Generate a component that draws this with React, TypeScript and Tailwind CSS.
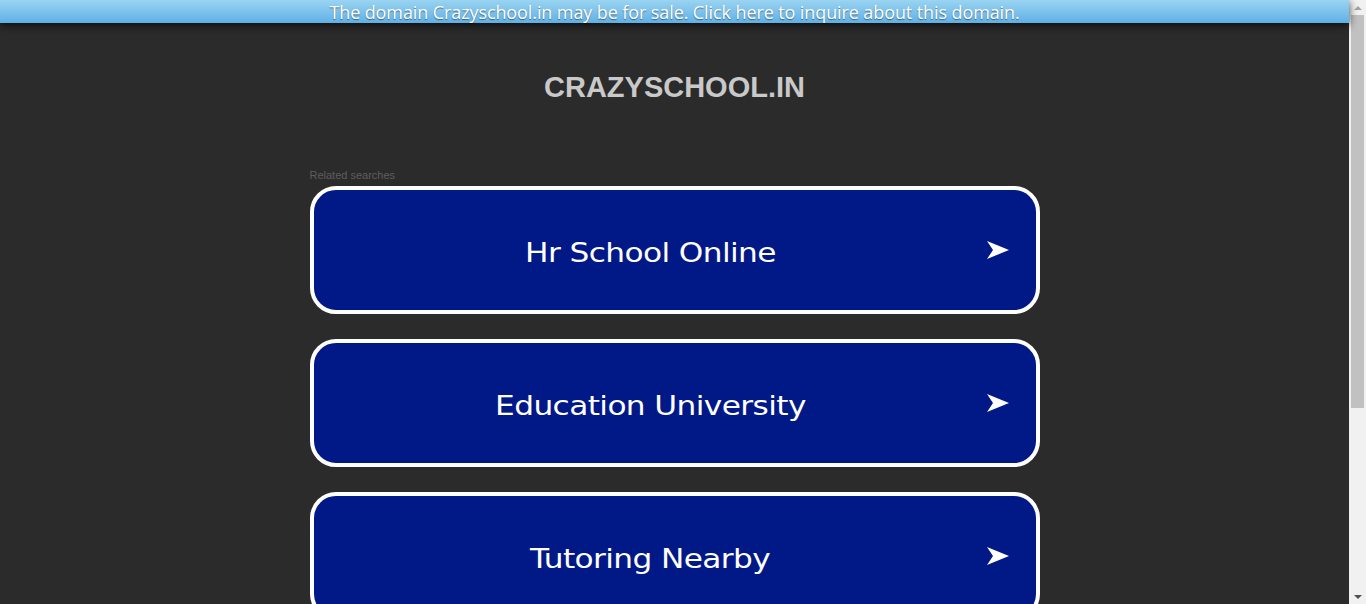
const searches = ["Hr School Online", "Education University", "Tutoring Nearby"];

function Arrow() {
  return (
    <svg width="22" height="18" viewBox="0 0 22 18" aria-hidden="true">
      <path d="M0 0 L22 9 L0 18 L6 9 Z" fill="#ffffff" />
    </svg>
  );
}

function SearchCard({ label }: { label: string }) {
  return (
    <a
      href="#"
      className="relative flex h-[128px] shrink-0 items-center rounded-[26px] border-4 border-white bg-[#011887] pr-[48px] text-white"
    >
      <span className="flex-1 pt-[5px] text-center">
        <span className="inline-block scale-x-[1.2] font-['DejaVu_Sans',sans-serif] text-[26px] leading-[30px] tracking-[-0.5px]">
          {label}
        </span>
      </span>
      <span className="absolute right-[27px] top-1/2 flex -translate-y-1/2">
        <Arrow />
      </span>
    </a>
  );
}

function Scrollbar() {
  return (
    <div className="flex h-full w-[17px] shrink-0 flex-col items-center bg-[#f1f1f1]">
      <div className="flex h-[15px] items-center justify-center">
        <div className="h-0 w-0 border-x-[4px] border-b-[4px] border-x-transparent border-b-[#a3a3a3]" />
      </div>
      <div className="h-[393px] w-[13px] bg-[#c1c1c1]" />
      <div className="flex-1" />
      <div className="flex h-[15px] items-center justify-center">
        <div className="h-0 w-0 border-x-[4px] border-t-[4px] border-x-transparent border-t-[#505050]" />
      </div>
    </div>
  );
}

export default function App() {
  return (
    <div className="flex h-[604px] overflow-hidden bg-[#2b2b2b]">
      <div className="flex min-w-0 flex-1 flex-col">
        <div className="relative z-10 flex h-[23px] shrink-0 items-center justify-center bg-gradient-to-b from-[#9ad4f1] to-[#5fb0e6] shadow-[0_2px_8px_rgba(0,0,0,0.75)]">
          <a
            href="#"
            className="font-['Open_Sans',sans-serif] text-[18px] leading-[20px] tracking-[-0.1px] text-white [text-shadow:0_1px_1px_rgba(0,0,0,0.45)]"
          >
            The domain Crazyschool.in may be for sale. Click here to inquire about this domain.
          </a>
        </div>

        <div className="pt-[48px] text-center">
          <h1 className="font-['Liberation_Sans',sans-serif] text-[29px] leading-[33px] font-bold text-[#c9c9c9]">
            CRAZYSCHOOL.IN
          </h1>
        </div>

        <div className="mx-auto mt-[65px] w-[730px]">
          <p className="mb-[4px] font-['Liberation_Sans',sans-serif] text-[11px] leading-[13px] text-[#5e5e5e]">
            Related searches
          </p>
          <div className="flex flex-col gap-[25px]">
            {searches.map((s) => (
              <SearchCard key={s} label={s} />
            ))}
          </div>
        </div>
      </div>
      <Scrollbar />
    </div>
  );
}
